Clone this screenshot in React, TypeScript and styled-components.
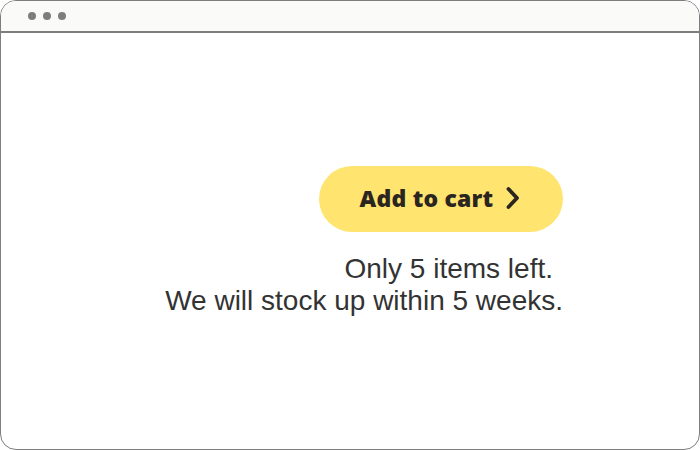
import styled, { createGlobalStyle } from "styled-components";

const GlobalStyle = createGlobalStyle`
  html, body {
    margin: 0;
    padding: 0;
    background: #ffffff;
  }
  * {
    box-sizing: border-box;
  }
`;

const Frame = styled.div`
  width: 700px;
  height: 450px;
  border: 1px solid #7d7d7d;
  border-radius: 16px;
  overflow: hidden;
  display: flex;
  flex-direction: column;
  background: #ffffff;
`;

const TitleBar = styled.div`
  height: 32px;
  flex-shrink: 0;
  background: #fafaf8;
  border-bottom: 2px solid #7d7d7d;
  display: flex;
  align-items: center;
  gap: 7px;
  padding-left: 27px;
`;

const Dot = styled.span`
  width: 8px;
  height: 8px;
  border-radius: 50%;
  background: #7d7d7d;
`;

const Content = styled.main`
  flex: 1;
  display: flex;
  flex-direction: column;
  align-items: flex-end;
  justify-content: center;
  padding-right: 136px;
`;

const CartButton = styled.button`
  width: 244px;
  height: 66px;
  border: none;
  border-radius: 33px;
  background: #ffe46f;
  color: #2b2520;
  font-family: "Open Sans", "Noto Sans", sans-serif;
  font-weight: 800;
  font-size: 23px;
  letter-spacing: 0.2px;
  display: flex;
  align-items: center;
  justify-content: center;
  gap: 12px;
  padding: 0 2px 2px 0;
  cursor: pointer;
`;

const Stock = styled.p`
  margin: 21px 0 0;
  font-family: "Liberation Sans", Arial, sans-serif;
  font-size: 28px;
  line-height: 32px;
  color: #333333;
  text-align: right;
`;

const Line = styled.span<{ $inset?: number }>`
  display: block;
  padding-right: ${(p) => p.$inset ?? 0}px;
`;

function Chevron() {
  return (
    <svg width="15" height="24" viewBox="0 0 15 24" fill="none">
      <path
        d="M3.5 3 L12 12 L3.5 21"
        stroke="#2b2520"
        strokeWidth="3.8"
        strokeLinecap="round"
        strokeLinejoin="round"
      />
    </svg>
  );
}

export default function App() {
  return (
    <>
      <GlobalStyle />
      <Frame>
        <TitleBar>
          <Dot />
          <Dot />
          <Dot />
        </TitleBar>
        <Content>
          <CartButton>
            Add to cart
            <Chevron />
          </CartButton>
          <Stock>
            <Line $inset={10}>Only 5 items left.</Line>
            <Line>We will stock up within 5 weeks.</Line>
          </Stock>
        </Content>
      </Frame>
    </>
  );
}
